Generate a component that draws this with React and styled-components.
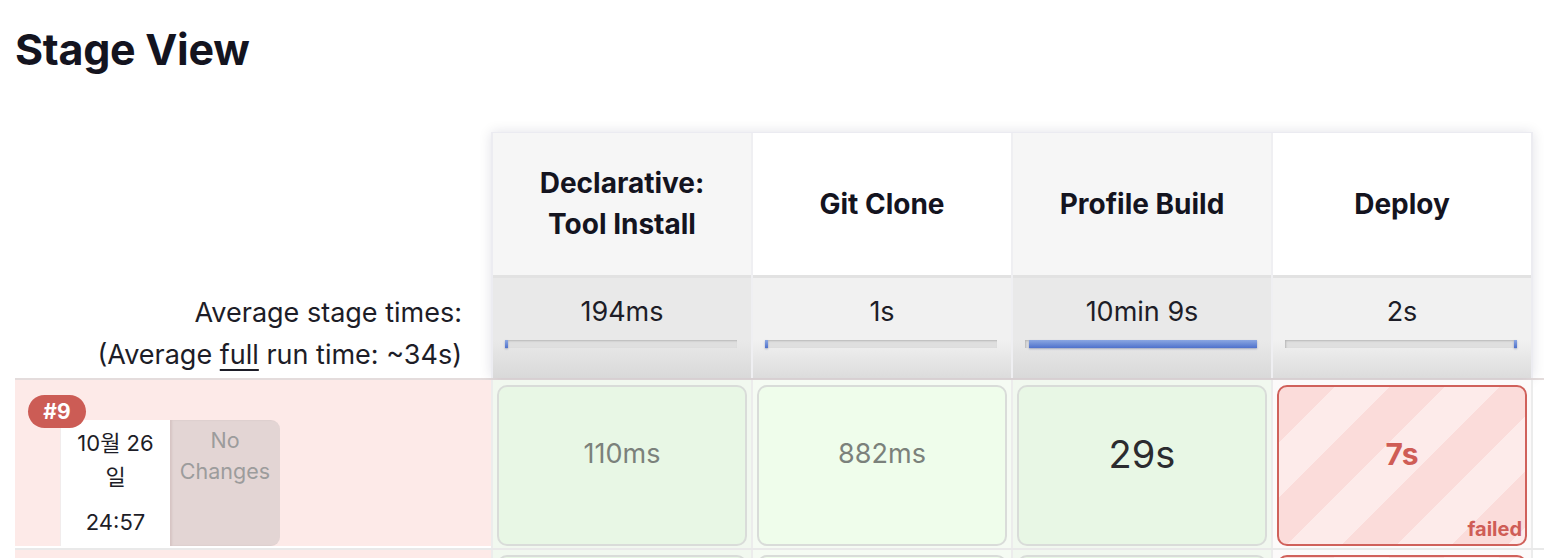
import React from "react";
import styled, { createGlobalStyle, css } from "styled-components";

const Global = createGlobalStyle`
  html, body { margin: 0; padding: 0; background: #fff; }
  body {
    font-family: "Inter", "Noto Sans CJK KR", sans-serif;
    color: #14141f;
    overflow: hidden;
    height: 558px;
  }
`;

const Page = styled.div`
  padding-left: 15px;
`;

const Title = styled.h2`
  margin: 23px 0 57px;
  font-size: 43px;
  line-height: 52px;
  font-weight: 700;
  letter-spacing: -0.3px;
  color: #14141f;
`;

const Head = styled.div`
  display: flex;
`;

const LabelColumn = styled.div`
  width: 476px;
  flex-shrink: 0;
  display: flex;
  flex-direction: column;
`;

const HeadSpacer = styled.div`
  height: 143px;
`;

const AvgLabel = styled.div`
  height: 103px;
  box-sizing: border-box;
  padding: 17px 29px 0 0;
  text-align: right;
  font-size: 27px;
  line-height: 42px;
  color: #1d1d27;
  span { text-decoration: underline; text-underline-offset: 5px; text-decoration-thickness: 2px; }
`;

const StageBlock = styled.div`
  display: flex;
  flex-shrink: 0;
  border-top: 1px solid #ebebf1;
  border-left: 2px solid #ececf1;
  border-right: 2px solid #ececf1;
  box-shadow: 0 0 12px rgba(20, 20, 60, 0.12);
`;

const StageColumn = styled.div`
  width: 258px;
  flex-shrink: 0;
  display: flex;
  flex-direction: column;
  & + & { border-left: 2px solid #efeff2; }
`;

const NameCell = styled.div`
  height: 142px;
  display: flex;
  align-items: center;
  justify-content: center;
  text-align: center;
  padding: 0 16px;
  font-size: 28px;
  line-height: 41px;
  font-weight: 700;
  color: #14141f;
  background: ${p => (p.$odd ? "#f6f6f6" : "#ffffff")};
`;

const AvgCell = styled.div`
  border-top: 3px solid #e2e2e2;
  padding-top: 19px;
  height: 81px;
  text-align: center;
  font-size: 27px;
  line-height: 30px;
  color: #1d1d27;
  background: ${p =>
    p.$odd
      ? "linear-gradient(to bottom, #e9e9e9 0%, #e9e9e9 62%, #d9d9d9 100%)"
      : "linear-gradient(to bottom, #f1f1f1 0%, #f1f1f1 62%, #dcdcdc 100%)"};
`;

const Track = styled.div`
  position: relative;
  margin: 13px 0 0 12px;
  width: 232px;
  height: 8px;
  background: #dfdfdf;
  box-shadow: inset 1px 1px 2px rgba(0, 0, 0, 0.18);
`;

const Fill = styled.div`
  position: absolute;
  top: 0;
  bottom: 0;
  background: linear-gradient(to bottom, #8ba7e2, #4f72cc);
  box-shadow: 0 1px 2px rgba(30, 50, 120, 0.35);
`;

const BuildRow = styled.div`
  display: flex;
  border-top: 2px solid ${p => (p.$first ? "#e4dcdc" : "#e9e9e9")};
  height: 168px;
`;

const BuildInfo = styled.div`
  position: relative;
  flex-shrink: 0;
  width: 476px;
  height: 166px;
  background: #fdeae8;
`;

const Badge = styled.div`
  position: absolute;
  left: 13px;
  top: 15px;
  z-index: 2;
  width: 58px;
  height: 33px;
  border-radius: 17px;
  background: #cc5c55;
  color: #fff;
  font-weight: 700;
  font-size: 21px;
  line-height: 33px;
  text-align: center;
`;

const Cards = styled.div`
  display: flex;
  margin: 40px 0 0 45px;
  height: 126px;
`;

const DateCard = styled.div`
  width: 110px;
  box-sizing: border-box;
  padding: 6px 8px 0;
  background: #fff;
  border-left: 1px solid #f1ecec;
  text-align: center;
  font-size: 22px;
  color: #1d1d27;
`;

const DateText = styled.div`
  line-height: 34px;
`;

const TimeText = styled.div`
  margin-top: 11px;
  line-height: 34px;
`;

const ChangesCard = styled.div`
  width: 110px;
  box-sizing: border-box;
  padding-top: 5px;
  background: #e3d5d4;
  border-radius: 0 9px 9px 0;
  box-shadow: inset 2px 0 2px rgba(120, 80, 80, 0.12);
  text-align: center;
  font-size: 21.5px;
  line-height: 31px;
  color: #9c9c9c;
`;

const StageCell = styled.div`
  display: flex;
  flex-shrink: 0;
  width: 260px;
  box-sizing: border-box;
  padding: 5px 4px 2px;
  border-left: 2px solid #ececec;
  background: ${p => (p.$failed ? "#fcfafa" : p.$odd ? "#f1f8ef" : "#f5fbf3")};
  &:last-child {
    width: 262px;
    border-right: 2px solid #ececec;
  }
`;

const Box = styled.div`
  position: relative;
  flex: 1;
  box-sizing: border-box;
  border-radius: 10px;
  padding-bottom: 24px;
  display: flex;
  align-items: center;
  justify-content: center;
  ${p =>
    p.$failed
      ? css`
          border: 2px solid #d0615b;
          background: repeating-linear-gradient(
            135deg,
            #fbdcda 0px,
            #fbdcda 39px,
            #fdebea 39px,
            #fdebea 78px
          );
          color: #cf5d56;
          font-weight: 700;
          font-size: 30px;
        `
      : css`
          border: 2px solid #d9dcd9;
          background: ${p.$odd ? "#e8f7e5" : "#effdeb"};
          color: ${p.$long ? "#2b2b2f" : "#7b817b"};
          font-size: ${p.$long ? "38px" : "27px"};
        `}
`;

const FailedTag = styled.span`
  position: absolute;
  right: 3px;
  bottom: 4px;
  font-size: 20px;
  line-height: 22px;
  font-weight: 700;
  color: #cf5d56;
`;

const stages = [
  { name: ["Declarative:", "Tool Install"], avg: "194ms", start: 0, width: 1.3 },
  { name: ["Git Clone"], avg: "1s", start: 0, width: 1.3 },
  { name: ["Profile Build"], avg: "10min 9s", start: 1.6, width: 98.4 },
  { name: ["Deploy"], avg: "2s", start: 98.7, width: 1.3 },
];

/* The second run only peeks in at the bottom edge of the view, so only its
   boxes are drawn (its labels sit below the visible frame). */
const builds = [
  {
    id: "#9",
    date: "10월 26 일",
    time: "24:57",
    cells: [
      { t: "110ms" },
      { t: "882ms" },
      { t: "29s", long: true },
      { t: "7s", failed: true },
    ],
  },
  {
    id: null,
    cells: [{}, {}, {}, { failed: true }],
  },
];

export default function App() {
  return (
    <Page>
      <Global />
      <Title>Stage View</Title>
      <Head>
        <LabelColumn>
          <HeadSpacer />
          <AvgLabel>
            Average stage times:
            <br />
            (Average <span>full</span> run time: ~34s)
          </AvgLabel>
        </LabelColumn>
        <StageBlock>
          {stages.map((s, i) => (
            <StageColumn key={i}>
              <NameCell $odd={i % 2 === 0}>
                <div>
                  {s.name.map((l, j) => (
                    <div key={j}>{l}</div>
                  ))}
                </div>
              </NameCell>
              <AvgCell $odd={i % 2 === 0}>
                {s.avg}
                <Track>
                  <Fill style={{ left: `${s.start}%`, width: `${s.width}%` }} />
                </Track>
              </AvgCell>
            </StageColumn>
          ))}
        </StageBlock>
      </Head>
      {builds.map((b, bi) => (
        <BuildRow key={bi} $first={bi === 0}>
          <BuildInfo>
            {b.id && (
              <>
                <Badge>{b.id}</Badge>
                <Cards>
                  <DateCard>
                    <DateText>{b.date}</DateText>
                    <TimeText>{b.time}</TimeText>
                  </DateCard>
                  <ChangesCard>
                    No
                    <br />
                    Changes
                  </ChangesCard>
                </Cards>
              </>
            )}
          </BuildInfo>
          {b.cells.map((c, i) => (
            <StageCell key={i} $odd={i % 2 === 0} $failed={c.failed}>
              <Box $odd={i % 2 === 0} $failed={c.failed} $long={c.long}>
                {c.t}
                {c.failed && c.t && <FailedTag>failed</FailedTag>}
              </Box>
            </StageCell>
          ))}
        </BuildRow>
      ))}
    </Page>
  );
}
